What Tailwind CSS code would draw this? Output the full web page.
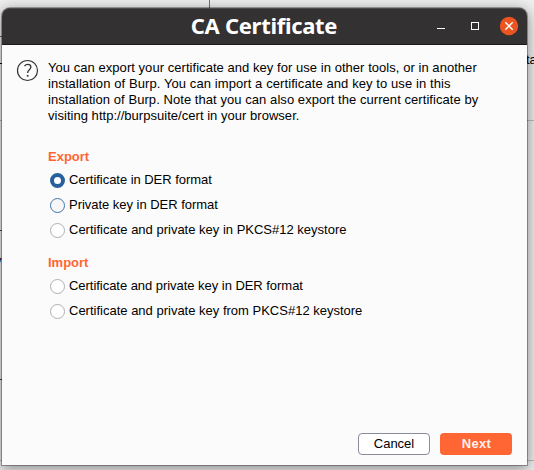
<!DOCTYPE html>
<html lang="en">
<head>
<meta charset="utf-8">
<title>CA Certificate</title>
<script src="https://cdn.jsdelivr.net/npm/@tailwindcss/browser@4"></script>
</head>
<body class="relative h-[470px] w-[534px] overflow-hidden bg-[#eeeeee] font-['Liberation_Sans',Arial,sans-serif] text-[13px] text-black">
<!-- Window behind the dialog -->
<div class="absolute left-[209px] top-0 h-2 w-px bg-[#73737b]"></div>
<div class="absolute left-0 top-[36px] h-px w-[3px] bg-[#62626c]"></div>
<div class="absolute left-0 top-[63px] h-px w-[3px] bg-black"></div>
<div class="absolute left-0 top-[120px] h-px w-[534px] bg-[#bbbbbb]"></div>
<div class="absolute left-0 top-[230px] h-px w-[3px] bg-[#555555]"></div>
<div class="absolute left-[-5px] top-[253px] leading-4">y</div>
<div class="absolute left-0 top-[379px] h-px w-[3px] bg-[#444444]"></div>
<div class="absolute left-0 top-[460px] h-px w-[534px] bg-[#bbbbbb]"></div>
<div class="absolute left-[526px] top-[52px] leading-4">ta</div>

<!-- Dialog -->
<main class="absolute left-[2px] top-[8px] flex h-[457px] w-[525px] flex-col rounded-t-[8px] bg-[#fbfbfb] shadow-[0_0_0_1px_rgba(0,0,0,0.3),0_3px_14px_1px_rgba(0,0,0,0.42)]">
  <header class="relative flex h-[37px] shrink-0 items-center rounded-t-[8px] border-b border-[#1c1b1b] bg-[#333131] shadow-[inset_0_1px_0_#4b4949]">
    <h1 class="w-full pr-px pb-[2px] text-center font-['Noto_Sans',sans-serif] text-[22px] leading-[34px] font-bold tracking-[-0.3px] text-white">CA Certificate</h1>
    <div class="absolute right-[9px] top-[9px] flex items-center">
      <svg class="h-[18px] w-[82px] overflow-visible" viewBox="0 0 82 18" fill="none">
        <path d="M1 11.5h8" stroke="#fff"/>
        <rect x="35.5" y="5.5" width="7" height="7" stroke="#fff"/>
        <circle cx="73" cy="9" r="9.2" fill="#e95420"/>
        <path d="M69.3 5.3l7.4 7.4m0-7.4l-7.4 7.4" stroke="#fff" stroke-width="1.4"/>
      </svg>
    </div>
  </header>
  <section class="flex grow pl-[14px] pt-[15px]">
    <svg class="mt-[-1px] h-[22px] w-[22px] shrink-0 overflow-visible" viewBox="0 0 22 22" fill="none" stroke="#333">
      <circle cx="11.5" cy="11.5" r="10" stroke-width="1.2"/>
      <path d="M8.5 7.1Q9.7 5.4 11.7 5.4C13.7 5.4 14.9 6.4 14.9 8.1C14.9 10.7 11.6 10.7 11.6 13.9" stroke-width="1.3"/>
      <path d="M10.8 16.8h1.7" stroke-width="1.7"/>
    </svg>
    <div class="ml-[10px] whitespace-nowrap">
      <p class="leading-4"><span class="tracking-[0.047px]">You can export your certificate and key for use in other tools, or in another</span><br><span class="tracking-[0.09px]">installation of Burp. You can import a certificate and key to use in this</span><br><span class="tracking-[0.06px]">installation of Burp. Note that you can also export the current certificate by</span><br><span class="tracking-[0.03px]">visiting http://burpsuite/cert in your browser.</span></p>
      <h2 class="mt-[25px] leading-4 font-bold text-[#ff6633]">Export</h2>
      <div class="mt-px flex flex-col pl-[2px]">
        <label class="flex h-[25px] items-center gap-[4px]"><i class="mt-[3px] size-[15px] rounded-full border-4 border-[#26619d] bg-white"></i><span class="mt-[2px] tracking-[-0.04px]">Certificate in DER format</span></label>
        <label class="flex h-[25px] items-center gap-[4px]"><i class="mt-[3px] size-[15px] rounded-full border border-[#3f75aa] bg-[#f7f7f7]"></i><span class="mt-[2px] tracking-[-0.03px]">Private key in DER format</span></label>
        <label class="flex h-[25px] items-center gap-[4px]"><i class="mt-[3px] size-[15px] rounded-full border border-[#b0b0b0] bg-white"></i><span class="mt-[2px]">Certificate and private key in PKCS#12 keystore</span></label>
      </div>
      <h2 class="mt-[14px] leading-4 font-bold text-[#ff6633]">Import</h2>
      <div class="mt-px flex flex-col pl-[2px]">
        <label class="flex h-[25px] items-center gap-[4px]"><i class="mt-[3px] size-[15px] rounded-full border border-[#b0b0b0] bg-white"></i><span class="mt-[2px] tracking-[-0.04px]">Certificate and private key in DER format</span></label>
        <label class="flex h-[25px] items-center gap-[4px]"><i class="mt-[3px] size-[15px] rounded-full border border-[#b0b0b0] bg-white"></i><span class="mt-[2px]">Certificate and private key from PKCS#12 keystore</span></label>
      </div>
    </div>
  </section>
  <footer class="flex justify-end gap-[10px] pr-[15px] pb-[10px]">
    <button class="h-[22px] w-[72px] rounded-[4px] border border-[#8b8b9b] bg-white leading-5">Cancel</button>
    <button class="h-[22px] w-[72px] rounded-[4px] bg-[#ff6633] pl-px font-bold leading-[22px] tracking-[0.3px] text-[#fff0eb]">Next</button>
  </footer>
</main>
</body>
</html>
